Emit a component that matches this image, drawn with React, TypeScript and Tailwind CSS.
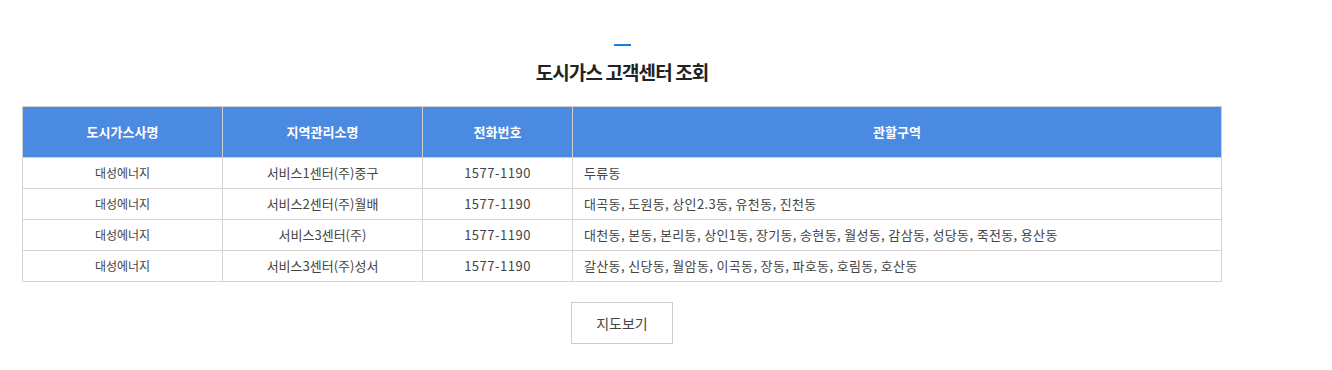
import React from 'react';

const rows = [
  { company: '대성에너지', office: '서비스1센터(주)중구', tel: '1577-1190', area: '두류동' },
  { company: '대성에너지', office: '서비스2센터(주)월배', tel: '1577-1190', area: '대곡동, 도원동, 상인2.3동, 유천동, 진천동' },
  { company: '대성에너지', office: '서비스3센터(주)', tel: '1577-1190', area: '대천동, 본동, 본리동, 상인1동, 장기동, 송현동, 월성동, 감삼동, 성당동, 죽전동, 용산동' },
  { company: '대성에너지', office: '서비스3센터(주)성서', tel: '1577-1190', area: '갈산동, 신당동, 월암동, 이곡동, 장동, 파호동, 호림동, 호산동' },
];

export default function App() {
  return (
    <div
      className="w-[1332px] h-[370px] bg-white"
      style={{ fontFamily: '"Noto Sans CJK KR", "Noto Sans", sans-serif' }}
    >
      <div className="w-[1200px] ml-[22px] pt-[44px]">
        <div className="flex flex-col items-center">
          <span className="block w-[17px] h-[2px] bg-[#1a7de0]" />
          <h2 className="mt-[12px] text-[19px] leading-[28px] font-bold tracking-[-0.9px] text-[#222]">
            도시가스 고객센터 조회
          </h2>
        </div>

        <table className="mt-[20px] w-full border-collapse table-fixed text-[13px]">
          <colgroup>
            <col className="w-[200px]" />
            <col className="w-[200px]" />
            <col className="w-[150px]" />
            <col />
          </colgroup>
          <thead>
            <tr className="bg-[#4a8ae0] text-white h-[51px]">
              <th className="border border-[#cfcfcf] font-bold">도시가스사명</th>
              <th className="border border-[#cfcfcf] font-bold">지역관리소명</th>
              <th className="border border-[#cfcfcf] font-bold">전화번호</th>
              <th className="border border-[#cfcfcf] font-bold">관할구역</th>
            </tr>
          </thead>
          <tbody className="text-[#444]">
            {rows.map((r, i) => (
              <tr key={i} className="h-[31px]">
                <td className="border border-[#d4d4d4] text-center text-[12px]">{r.company}</td>
                <td className="border border-[#d4d4d4] text-center">{r.office}</td>
                <td className="border border-[#d4d4d4] text-center tracking-[0.5px]">{r.tel}</td>
                <td className="border border-[#d4d4d4] pl-[11px] tracking-[0.35px]">{r.area}</td>
              </tr>
            ))}
          </tbody>
        </table>

        <div className="flex justify-center mt-[20px]">
          <button className="w-[102px] h-[42px] border border-[#cccccc] bg-white text-[14px] text-[#444]">
            지도보기
          </button>
        </div>
      </div>
    </div>
  );
}
